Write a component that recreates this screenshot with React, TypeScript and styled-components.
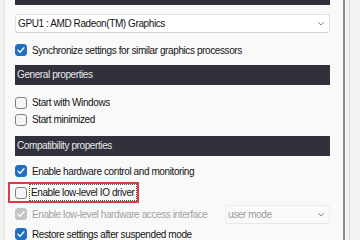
import styled, { createGlobalStyle } from "styled-components";

const GlobalStyle = createGlobalStyle`
  html, body {
    margin: 0;
    padding: 0;
  }
  body {
    width: 360px;
    height: 240px;
    overflow: hidden;
    background: #f9f9f9;
    font-family: "Liberation Sans", Arial, sans-serif;
    font-size: 10px;
    letter-spacing: -0.4px;
    color: #141414;
  }
`;

const Window = styled.div`
  display: flex;
  width: 360px;
  height: 240px;
  overflow: hidden;
`;

const Gutter = styled.div`
  flex: none;
  width: 4px;
  background: #f2f2f2;
  border-right: 1px solid #e4e4e4;
`;

const Content = styled.div`
  flex: none;
  display: flex;
  flex-direction: column;
  width: 315px;
  padding: 0 13px 0 10px;
`;

const ScrollEdge = styled.div`
  flex: 1;
  display: flex;
  background: #f3f3f3;
  border-left: 2px solid #8d8d8d;
`;

const Track = styled.div`
  width: 4px;
  border-right: 1px solid #d9d9d9;
`;

const Header = styled.div<{ $mt: number }>`
  flex: none;
  height: 20px;
  line-height: 20px;
  margin-top: ${(p) => p.$mt}px;
  padding-left: 2px;
  background: #30313a;
  color: #e8e8ea;
  white-space: nowrap;
  overflow: hidden;
`;

const Select = styled.div<{ $mt?: number; $disabled?: boolean; $width?: number }>`
  flex: none;
  display: flex;
  align-items: center;
  justify-content: space-between;
  box-sizing: border-box;
  height: 19px;
  width: ${(p) => (p.$width ? `${p.$width}px` : "auto")};
  margin-top: ${(p) => p.$mt ?? 0}px;
  padding: 0 4px 0 2px;
  background: ${(p) => (p.$disabled ? "#fafafa" : "#ffffff")};
  border: 1px solid ${(p) => (p.$disabled ? "#ededed" : "#e1e1e1")};
  border-bottom-color: ${(p) => (p.$disabled ? "#e6e6e6" : "#d2d2d2")};
  border-radius: 3px;
  color: ${(p) => (p.$disabled ? "#9a9a9a" : "#141414")};
`;

const Row = styled.div<{ $mt: number; $h?: number; $spread?: boolean }>`
  flex: none;
  display: flex;
  align-items: center;
  justify-content: ${(p) => (p.$spread ? "space-between" : "flex-start")};
  height: ${(p) => p.$h ?? 18}px;
  margin-top: ${(p) => p.$mt}px;
`;

const Option = styled.div`
  display: flex;
  align-items: center;
  gap: 3px;
`;

const Highlight = styled.div<{ $mt: number }>`
  flex: none;
  display: flex;
  align-items: center;
  gap: 2px;
  box-sizing: border-box;
  width: 131px;
  height: 21px;
  margin: ${(p) => p.$mt}px 0 0 -7px;
  padding-left: 5px;
  border: 2px solid #e03a48;
`;

const Box = styled.span<{ $checked?: boolean; $disabled?: boolean }>`
  flex: none;
  display: inline-flex;
  align-items: center;
  justify-content: center;
  box-sizing: border-box;
  width: 12px;
  height: 12px;
  border-radius: 3px;
  background: ${(p) =>
    p.$checked ? (p.$disabled ? "#c4c4c4" : "#1f6fc5") : "#f5f5f5"};
  border: 1px solid
    ${(p) => (p.$checked ? (p.$disabled ? "#c4c4c4" : "#1f6fc5") : "#7f7f7f")};
`;

const Label = styled.span<{ $disabled?: boolean; $focused?: boolean }>`
  white-space: nowrap;
  color: ${(p) => (p.$disabled ? "#a2a2a2" : "#141414")};
  line-height: 15px;
  padding: 0 1px;
  border: 1px ${(p) => (p.$focused ? "dotted #555" : "solid transparent")};
`;

const Chevron = () => (
  <svg width="8" height="5" viewBox="0 0 8 5">
    <path d="M1 1l3 3 3-3" fill="none" stroke="#8a8a8a" strokeWidth="1" />
  </svg>
);

const Check = () => (
  <svg width="10" height="10" viewBox="0 0 10 10">
    <path
      d="M2 5.2l2 2 4-4.4"
      fill="none"
      stroke="#ffffff"
      strokeWidth="1.3"
      strokeLinecap="round"
      strokeLinejoin="round"
    />
  </svg>
);

type CheckProps = {
  label: string;
  checked?: boolean;
  disabled?: boolean;
  focused?: boolean;
};

function CheckOption({ label, checked, disabled, focused }: CheckProps) {
  return (
    <>
      <Box $checked={checked} $disabled={disabled}>
        {checked && <Check />}
      </Box>
      <Label $disabled={disabled} $focused={focused}>
        {label}
      </Label>
    </>
  );
}

export default function App() {
  return (
    <>
      <GlobalStyle />
      <Window>
        <Gutter />
        <Content>
          <Header $mt={-15}>Master graphics processor selection</Header>
          <Select $mt={9}>
            <span>GPU1 : AMD Radeon(TM) Graphics</span>
            <Chevron />
          </Select>
          <Row $mt={8}>
            <Option>
              <CheckOption checked label="Synchronize settings for similar graphics processors" />
            </Option>
          </Row>

          <Header $mt={6}>General properties</Header>
          <Row $mt={9} $h={17}>
            <Option>
              <CheckOption label="Start with Windows" />
            </Option>
          </Row>
          <Row $mt={0} $h={17}>
            <Option>
              <CheckOption label="Start minimized" />
            </Option>
          </Row>

          <Header $mt={8}>Compatibility properties</Header>
          <Row $mt={6}>
            <Option>
              <CheckOption checked label="Enable hardware control and monitoring" />
            </Option>
          </Row>
          <Highlight $mt={2}>
            <CheckOption focused label="Enable low-level IO driver" />
          </Highlight>
          <Row $mt={2} $spread>
            <Option>
              <CheckOption checked disabled label="Enable low-level hardware access interface" />
            </Option>
            <Select $disabled $width={105}>
              <span>user mode</span>
              <Chevron />
            </Select>
          </Row>
          <Row $mt={2}>
            <Option>
              <CheckOption checked label="Restore settings after suspended mode" />
            </Option>
          </Row>
        </Content>
        <ScrollEdge>
          <Track />
        </ScrollEdge>
      </Window>
    </>
  );
}
